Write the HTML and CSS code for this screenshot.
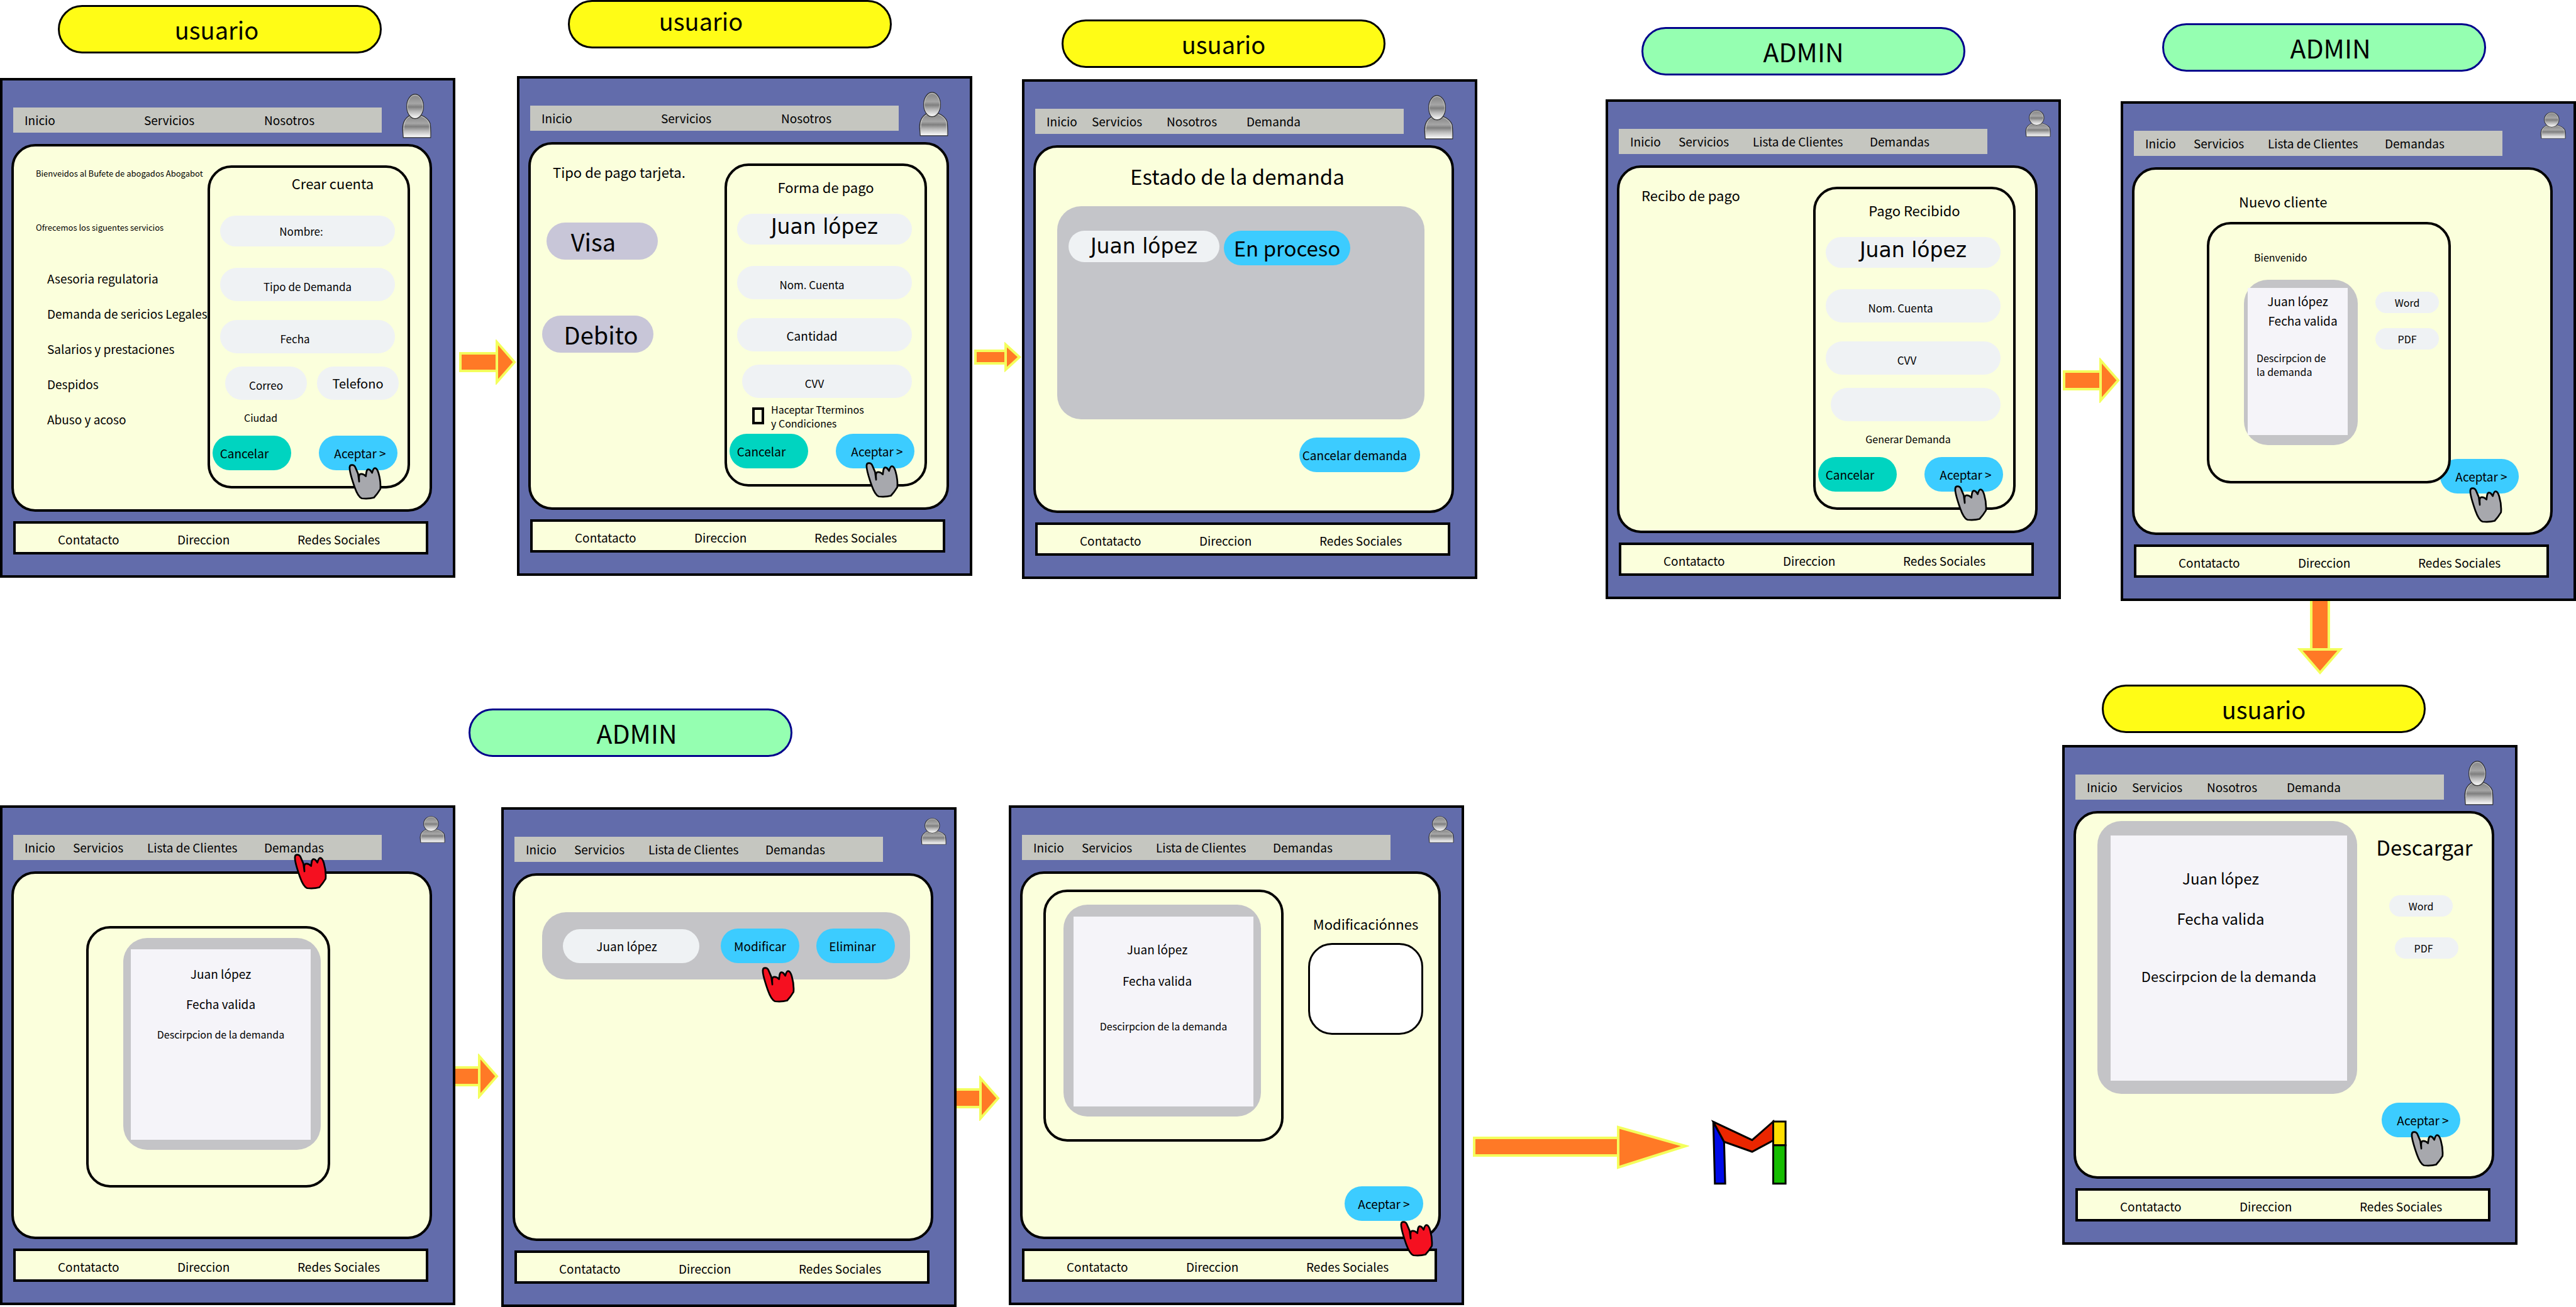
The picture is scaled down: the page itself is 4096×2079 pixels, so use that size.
FILE: index.html
```html
<!DOCTYPE html>
<html lang="es">
<head>
<meta charset="utf-8">
<meta name="viewport" content="width=device-width, initial-scale=1">
<title>Abogabot</title>
<link rel="stylesheet" href="styles.css">
</head>
<body>
<svg class="defs" aria-hidden="true">
  <defs>
    <linearGradient id="metal" x1="0" y1="0" x2="0" y2="1">
      <stop offset="0" stop-color="#8f8f8f"/>
      <stop offset="0.15" stop-color="#909090"/>
      <stop offset="0.38" stop-color="#a6a6a6"/>
      <stop offset="0.52" stop-color="#7f7f7f"/>
      <stop offset="0.7" stop-color="#b8b8b8"/>
      <stop offset="1" stop-color="#ffffff"/>
    </linearGradient>
    <symbol id="person" viewBox="383 61 190 286" preserveAspectRatio="none">
      <path d="M392 342 L388 292 C386 240 408 212 442 196 H500 C532 208 556 226 565 252 C569 280 570 300 568 342 Z" fill="url(#metal)" stroke="#2f2f2f" stroke-width="5"/>
      <path d="M395 290 C394 240 414 216 436 206 M508 206 C532 216 552 230 560 256 L564 338" fill="none" stroke="#d2d2d2" stroke-width="4"/>
      <ellipse cx="468" cy="143" rx="54" ry="78" fill="url(#metal)" stroke="#2f2f2f" stroke-width="5"/>
      <ellipse cx="468" cy="143" rx="50" ry="73" fill="none" stroke="#dadada" stroke-width="3"/>
    </symbol>
    <symbol id="hand" viewBox="130 183 214 230">
      <path d="M138 206 C138 184 166 184 175 206 L192 246 L199 296 C198 270 194 252 206 248 C220 244 232 252 242 262 C244 240 246 220 256 218 C268 216 274 226 282 240 C286 226 290 210 300 210 C310 210 318 224 324 244 C332 272 338 310 335 344 C322 366 308 384 294 399 C270 406 240 406 216 404 C196 396 180 360 170 332 C156 292 136 232 138 206 Z" fill="currentColor" stroke="#000" stroke-width="11" stroke-linejoin="round"/>
    </symbol>
  </defs>
</svg>

<main class="board">

  <p class="role role--user n1-role role--lean">usuario</p>
  <section class="screen n1">
    <header class="top">
      <nav class="menu menu--three"><a href="#">Inicio</a><a href="#">Servicios</a><a href="#">Nosotros</a></nav>
      <svg class="person"><use href="#person"/></svg>
    </header>
    <div class="page page--split">
      <div class="intro">
        <h2 class="headline headline--fine">Bienveidos al Bufete de abogados Abogabot</h2>
        <h2 class="headline headline--fine">Ofrecemos los siguentes servicios</h2>
        <ul class="services">
          <li>Asesoria regulatoria</li>
          <li>Demanda de sericios Legales</li>
          <li>Salarios y prestaciones</li>
          <li>Despidos</li>
          <li>Abuso y acoso</li>
        </ul>
      </div>
      <form class="form">
        <h3 class="form-title form-title--end">Crear cuenta</h3>
        <input class="field field--slim lean-s" placeholder="Nombre:" aria-label="Nombre">
        <input class="field" placeholder="Tipo de Demanda" aria-label="Tipo de Demanda">
        <input class="field lean-l" placeholder="Fecha" aria-label="Fecha">
        <div class="pair">
          <input class="field" placeholder="Correo" aria-label="Correo">
          <input class="field field--phone" placeholder="Telefono" aria-label="Telefono">
        </div>
        <p class="note note--city">Ciudad</p>
        <div class="actions">
          <button type="button" class="btn btn--cancel">Cancelar</button>
          <button type="button" class="btn btn--accept">Aceptar &gt;</button>
        </div>
      </form>
    </div>
    <footer class="foot"><a href="#">Contatacto</a><a href="#">Direccion</a><a href="#">Redes Sociales</a></footer>
    <svg class="hand"><use href="#hand"/></svg>
  </section>

  <p class="role role--user n2-role role--left">usuario</p>
  <section class="screen n2">
    <header class="top">
      <nav class="menu menu--three"><a href="#">Inicio</a><a href="#">Servicios</a><a href="#">Nosotros</a></nav>
      <svg class="person"><use href="#person"/></svg>
    </header>
    <div class="page page--split">
      <div class="intro">
        <h2 class="headline">Tipo de pago tarjeta.</h2>
        <div class="cards">
          <button type="button" class="card-type card-type--visa">Visa</button>
          <button type="button" class="card-type card-type--debit">Debito</button>
        </div>
      </div>
      <form class="form">
        <h3 class="form-title">Forma de pago</h3>
        <input class="field field--slim field--name" value="Juan lópez" aria-label="Nombre">
        <input class="field lean-l" placeholder="Nom. Cuenta" aria-label="Nom. Cuenta">
        <input class="field field--amount lean-l" placeholder="Cantidad" aria-label="Cantidad">
        <input class="field field--short lean-l" placeholder="CVV" aria-label="CVV">
        <label class="note note--terms"><input type="checkbox" class="tick"><span>Haceptar Tterminos<br>y Condiciones</span></label>
        <div class="actions">
          <button type="button" class="btn btn--cancel">Cancelar</button>
          <button type="button" class="btn btn--accept">Aceptar &gt;</button>
        </div>
      </form>
    </div>
    <footer class="foot"><a href="#">Contatacto</a><a href="#">Direccion</a><a href="#">Redes Sociales</a></footer>
    <svg class="hand"><use href="#hand"/></svg>
  </section>

  <p class="role role--user n3-role">usuario</p>
  <section class="screen n3">
    <header class="top">
      <nav class="menu menu--user"><a href="#">Inicio</a><a href="#">Servicios</a><a href="#">Nosotros</a><a href="#">Demanda</a></nav>
      <svg class="person"><use href="#person"/></svg>
    </header>
    <div class="page page--status">
      <h2 class="status-title">Estado de la demanda</h2>
      <div class="status-box">
        <span class="chip chip--client">Juan lópez</span>
        <span class="chip chip--progress">En proceso</span>
      </div>
      <button type="button" class="btn btn--drop">Cancelar demanda</button>
    </div>
    <footer class="foot"><a href="#">Contatacto</a><a href="#">Direccion</a><a href="#">Redes Sociales</a></footer>
  </section>

  <p class="role role--admin n4-role">ADMIN</p>
  <section class="screen n4">
    <header class="top">
      <nav class="menu menu--admin"><a href="#">Inicio</a><a href="#">Servicios</a><a href="#">Lista de Clientes</a><a href="#">Demandas</a></nav>
      <svg class="person person--small"><use href="#person"/></svg>
    </header>
    <div class="page page--split">
      <div class="intro">
        <h2 class="headline">Recibo de pago</h2>
      </div>
      <form class="form">
        <h3 class="form-title">Pago Recibido</h3>
        <input class="field field--slim field--name" value="Juan lópez" aria-label="Nombre">
        <input class="field lean-l" placeholder="Nom. Cuenta" aria-label="Nom. Cuenta">
        <input class="field lean-s" placeholder="CVV" aria-label="CVV">
        <input class="field field--short" aria-label="Otro dato">
        <p class="note note--case">Generar Demanda</p>
        <div class="actions">
          <button type="button" class="btn btn--cancel">Cancelar</button>
          <button type="button" class="btn btn--accept">Aceptar &gt;</button>
        </div>
      </form>
    </div>
    <footer class="foot"><a href="#">Contatacto</a><a href="#">Direccion</a><a href="#">Redes Sociales</a></footer>
    <svg class="hand"><use href="#hand"/></svg>
  </section>

  <p class="role role--admin n5-role role--right">ADMIN</p>
  <section class="screen n5">
    <header class="top">
      <nav class="menu menu--admin"><a href="#">Inicio</a><a href="#">Servicios</a><a href="#">Lista de Clientes</a><a href="#">Demandas</a></nav>
      <svg class="person person--small"><use href="#person"/></svg>
    </header>
    <div class="page page--client">
      <h2 class="client-title">Nuevo cliente</h2>
      <div class="frame">
        <p class="welcome">Bienvenido</p>
        <div class="frame-row">
          <article class="sheet sheet--small">
            <div class="paper">
              <p>Juan lópez</p>
              <p class="date">Fecha valida</p>
              <p class="about">Descirpcion de<br>la demanda</p>
            </div>
          </article>
          <div class="formats">
            <button type="button" class="format">Word</button>
            <button type="button" class="format">PDF</button>
          </div>
        </div>
      </div>
      <button type="button" class="btn btn--accept btn--tucked">Aceptar &gt;</button>
    </div>
    <footer class="foot"><a href="#">Contatacto</a><a href="#">Direccion</a><a href="#">Redes Sociales</a></footer>
    <svg class="hand"><use href="#hand"/></svg>
  </section>

  <p class="role role--user n6-role">usuario</p>
  <section class="screen n6">
    <header class="top">
      <nav class="menu menu--user"><a href="#">Inicio</a><a href="#">Servicios</a><a href="#">Nosotros</a><a href="#">Demanda</a></nav>
      <svg class="person"><use href="#person"/></svg>
    </header>
    <div class="page page--download">
      <article class="sheet sheet--large">
        <div class="paper">
          <p>Juan lópez</p>
          <p>Fecha valida</p>
          <p class="about">Descirpcion de la demanda</p>
        </div>
      </article>
      <div class="download">
        <h2 class="download-title">Descargar</h2>
        <button type="button" class="format format--word">Word</button>
        <button type="button" class="format format--pdf">PDF</button>
        <button type="button" class="btn btn--accept btn--low">Aceptar &gt;</button>
      </div>
    </div>
    <footer class="foot"><a href="#">Contatacto</a><a href="#">Direccion</a><a href="#">Redes Sociales</a></footer>
    <svg class="hand"><use href="#hand"/></svg>
  </section>

  <p class="role role--admin n7-role role--right">ADMIN</p>
  <section class="screen n7">
    <header class="top">
      <nav class="menu menu--admin"><a href="#">Inicio</a><a href="#">Servicios</a><a href="#">Lista de Clientes</a><a href="#">Demandas</a></nav>
      <svg class="person person--small"><use href="#person"/></svg>
    </header>
    <div class="page page--review">
      <div class="frame frame--sheet">
        <article class="sheet sheet--medium">
          <div class="paper">
            <p>Juan lópez</p>
            <p>Fecha valida</p>
            <p class="about">Descirpcion de la demanda</p>
          </div>
        </article>
      </div>
    </div>
    <footer class="foot"><a href="#">Contatacto</a><a href="#">Direccion</a><a href="#">Redes Sociales</a></footer>
    <svg class="hand hand--red hand--menu"><use href="#hand"/></svg>
  </section>

  <section class="screen n8">
    <header class="top">
      <nav class="menu menu--admin"><a href="#">Inicio</a><a href="#">Servicios</a><a href="#">Lista de Clientes</a><a href="#">Demandas</a></nav>
      <svg class="person person--small"><use href="#person"/></svg>
    </header>
    <div class="page page--list">
      <div class="client-row">
        <span class="client-name">Juan lópez</span>
        <button type="button" class="btn">Modificar</button>
        <button type="button" class="btn btn--remove">Eliminar</button>
      </div>
    </div>
    <footer class="foot"><a href="#">Contatacto</a><a href="#">Direccion</a><a href="#">Redes Sociales</a></footer>
    <svg class="hand hand--red hand--edit"><use href="#hand"/></svg>
  </section>

  <section class="screen n9">
    <header class="top">
      <nav class="menu menu--admin"><a href="#">Inicio</a><a href="#">Servicios</a><a href="#">Lista de Clientes</a><a href="#">Demandas</a></nav>
      <svg class="person person--small"><use href="#person"/></svg>
    </header>
    <div class="page page--edit">
      <div class="frame frame--edit">
        <article class="sheet sheet--edit">
          <div class="paper">
            <p class="lead">Juan lópez</p>
            <p class="lead">Fecha valida</p>
            <p class="about">Descirpcion de la demanda</p>
          </div>
        </article>
      </div>
      <div class="changes">
        <label for="changes">Modificaciónnes</label>
        <textarea id="changes"></textarea>
        <button type="button" class="btn btn--send">Aceptar &gt;</button>
      </div>
    </div>
    <footer class="foot"><a href="#">Contatacto</a><a href="#">Direccion</a><a href="#">Redes Sociales</a></footer>
    <svg class="hand hand--red hand--send"><use href="#hand"/></svg>
  </section>

  <svg class="arrow a1" viewBox="0 0 92 72"><path d="M2 22 H60 V50 H2 Z"/><path d="M60 4 L88 36 L60 68 Z"/></svg>
  <svg class="arrow a2" viewBox="0 0 76 48"><path d="M2 14 H50 V34 H2 Z"/><path d="M50 4 L72 24 L50 44 Z"/></svg>
  <svg class="arrow a4" viewBox="0 0 92 72"><path d="M2 22 H60 V50 H2 Z"/><path d="M60 4 L88 36 L60 68 Z"/></svg>
  <svg class="arrow a5" viewBox="0 0 72 118"><path d="M22 -4 H50 V77 H22 Z"/><path d="M4 77 H68 L36 114 Z"/></svg>
  <svg class="arrow a7" viewBox="0 0 70 72"><path d="M-4 22 H38 V50 H-4 Z"/><path d="M38 4 L66 36 L38 68 Z"/></svg>
  <svg class="arrow a8" viewBox="0 0 70 72"><path d="M-4 22 H38 V50 H-4 Z"/><path d="M38 4 L66 36 L38 68 Z"/></svg>
  <svg class="arrow a9" viewBox="0 0 344 70"><path d="M2 20 H231 V48 H2 Z"/><path d="M231 3 L338 33 L231 67 Z"/></svg>

  <svg class="mail" viewBox="1115 122 342 424" preserveAspectRatio="none" role="img" aria-label="Gmail">
    <path d="M1127 140 L1134 537 H1180 L1175 268 Z" fill="#000be8"/>
    <path d="M1127 140 L1300 257 L1394 138 V260 L1300 332 L1175 268 Z" fill="#ea2600"/>
    <path d="M1394 138 H1449 V291 H1394 Z" fill="#ffdf00"/>
    <path d="M1394 291 H1449 V537 H1394 Z" fill="#15bd00"/>
  </svg>
</main>
</body>
</html>
```

FILE: styles.css
```css
* { box-sizing: border-box; }

body {
  margin: 0;
  background: #fff;
  color: #000;
  font-family: "Noto Sans CJK SC", "Noto Sans", sans-serif;
  font-size: 19px;
}

h2, h3, p, ul { margin: 0; padding: 0; font-weight: 400; }
ul { list-style: none; }
a { color: inherit; text-decoration: none; }
button, input, textarea { margin: 0; padding: 0; border: 0; color: #000; font: inherit; }
.defs { position: absolute; width: 0; height: 0; }

/* Diagram canvas: every screen, role tag and arrow has its own place on it */
.board { position: relative; min-height: 100vh; }
.role, .screen, .arrow, .mail { position: absolute; }

.n1-role { left: 92px; top: 8px; }
.n2-role { left: 903px; top: 0; }
.n3-role { left: 1688px; top: 31px; }
.n4-role { left: 2610px; top: 43px; }
.n5-role { left: 3438px; top: 37px; }
.n6-role { left: 3342px; top: 1089px; }
.n7-role { left: 745px; top: 1127px; }
.n1 { left: 0; top: 124px; }
.n2 { left: 822px; top: 121px; }
.n3 { left: 1625px; top: 126px; }
.n4 { left: 2553px; top: 158px; }
.n5 { left: 3372px; top: 161px; }
.n6 { left: 3279px; top: 1185px; }
.n7 { left: 0; top: 1281px; }
.n8 { left: 797px; top: 1284px; }
.n9 { left: 1604px; top: 1281px; }
.a1 { left: 730px; top: 540px; width: 92px; height: 72px; }
.a2 { left: 1549px; top: 544px; width: 76px; height: 48px; }
.a4 { left: 3280px; top: 569px; width: 92px; height: 72px; }
.a5 { left: 3653px; top: 956px; width: 72px; height: 118px; }
.a7 { left: 724px; top: 1676px; width: 70px; height: 72px; }
.a8 { left: 1521px; top: 1711px; width: 70px; height: 72px; }
.a9 { left: 2342px; top: 1790px; width: 344px; height: 70px; }
.mail { left: 2720px; top: 1780px; width: 122px; height: 105px; overflow: visible; }

.arrow path { fill: #ff7926; stroke: #f4ff5c; stroke-width: 4px; }
.mail path { stroke: #000; stroke-width: 3px; vector-effect: non-scaling-stroke; }

/* Role tags */
.role {
  width: 515px;
  height: 77px;
  border: 3px solid #000;
  border-radius: 39px;
  font-size: 38px;
  line-height: 71px;
  text-align: center;
}
.role--user { background: #fffc16; }
.role--admin { background: #95ffb1; border-color: #00008b; font-size: 41px; }
.role--lean { padding-right: 10px; }
.role--left { padding-right: 92px; line-height: 60px; }
.role--right { padding-left: 20px; }

/* Screen shell */
.screen {
  width: 724px;
  border: 4px solid #000;
  background: #626cab;
  padding-bottom: 33px;
}
.top { display: flex; align-items: flex-start; height: 101px; padding-left: 17px; }
.menu {
  flex: 1;
  display: grid;
  margin-top: 43px;
  padding-left: 18px;
  background: #c5c6c0;
  line-height: 40px;
  white-space: nowrap;
}
.menu--three { grid-template-columns: 190px 191px auto; }
.menu--user { grid-template-columns: 72px 119px 127px auto; }
.menu--admin { grid-template-columns: 77px 118px 186px auto; }
.person { width: 47px; height: 71px; margin: 21px 34px 0 32px; }
.person--small { width: 41px; height: 43px; margin: 13px 12px 0 60px; }
.page {
  min-height: 585px;
  margin: 0 33px 0 14px;
  border: 4px solid #000;
  border-radius: 38px;
  background: #fbffdc;
}
.foot {
  display: grid;
  grid-template-columns: 190px 191px auto;
  margin: 15px 39px 0 17px;
  padding: 4px 0 0 67px;
  border: 4px solid #000;
  background: #fbffdc;
  line-height: 41px;
}
.hand { position: absolute; left: 550px; top: 610px; width: 53px; height: 57px; color: #a7a8ad; z-index: 2; }
.hand--red { color: #f51020; }
.hand--menu { left: 463px; top: 73px; }
.hand--edit { left: 410px; top: 250px; }
.hand--send { left: 618px; top: 657px; }

/* Buttons */
.btn {
  width: 125px;
  height: 55px;
  border-radius: 28px;
  background: #3cccff;
  line-height: 55px;
  white-space: nowrap;
}
.btn--cancel { background: #00d4c0; padding-right: 24px; }
.btn--accept { padding-left: 6px; }

/* Screens with a form on the right */
.page--split { display: grid; grid-template-columns: 308px minmax(0, 1fr); }
.headline {
  padding-left: 35px;
  font-size: 22px;
  line-height: 86px;
  white-space: nowrap;
}
.headline--fine { font-size: 13px; }
.services { padding: 10px 0 0 53px; line-height: 56px; white-space: nowrap; }
.cards { padding-top: 38px; }
.card-type {
  display: block;
  width: 177px;
  height: 59px;
  border-radius: 30px;
  background: #c8c6d8;
  font-size: 38px;
  line-height: 59px;
}
.card-type--visa { margin-left: 25px; padding-right: 28px; }
.card-type--debit { margin: 89px 0 0 18px; padding-left: 10px; }

.form {
  display: flex;
  flex-direction: column;
  height: 514px;
  margin: 30px 31px 33px 0;
  border: 4px solid #000;
  border-radius: 38px;
}
.form-title { margin-bottom: 10px; font-size: 22px; line-height: 66px; text-align: center; }
.form-title--end { padding-left: 76px; margin-bottom: 28px; line-height: 48px; }
.field {
  min-width: 0;
  height: 53px;
  margin: 0 20px 30px 16px;
  padding-top: 6px;
  border-radius: 27px;
  background: #eff2f4;
  font-size: 17px;
  text-align: center;
}
.field::placeholder { color: #000; opacity: 1; }
.field--slim { height: 49px; margin-bottom: 34px; padding-top: 0; }
.field--name { padding-bottom: 8px; font-family: "DejaVu Sans", sans-serif; font-size: 33px; }
.field--amount { font-size: 19px; padding-top: 2px; }
.field--short { margin-left: 24px; }
.lean-s { padding-right: 20px; }
.lean-l { padding-right: 40px; }
.field:has(+ .pair), .field:has(+ .field--short) { margin-bottom: 21px; }
.pair { display: grid; grid-template-columns: 1fr 1fr; gap: 16px; margin: 0 14px 0 24px; }
.pair .field, .field--short { margin-bottom: 0; }
.pair .field { margin-left: 0; margin-right: 0; }
.field--phone { font-size: 20px; padding-top: 0; }
.note { height: 57px; font-size: 16px; line-height: 57px; }
.note--city { padding-left: 54px; }
.note--case { padding-right: 20px; text-align: center; }
.note--terms { display: flex; align-items: center; gap: 11px; padding-left: 40px; line-height: 22px; white-space: nowrap; }
.tick { appearance: none; width: 19px; height: 27px; border: 4px solid #000; }
.actions { display: flex; justify-content: space-between; padding: 0 16px 0 4px; }

/* Case status */
.status-title { padding-right: 20px; margin-bottom: 3px; font-size: 33px; line-height: 90px; text-align: center; }
.status-box {
  display: flex;
  align-items: flex-start;
  gap: 7px;
  width: 584px;
  height: 339px;
  margin-left: 34px;
  padding: 39px 18px;
  border-radius: 38px;
  background: #c4c5c9;
}
.chip { border-radius: 28px; text-align: center; white-space: nowrap; }
.chip--client { width: 240px; background: #eff2f4; font-family: "DejaVu Sans", sans-serif; font-size: 33px; line-height: 50px; }
.chip--progress { width: 201px; background: #3cccff; font-size: 33px; line-height: 55px; }
.btn--drop { display: block; width: 192px; margin: 29px 0 0 419px; padding-right: 16px; }

/* Documents */
.frame {
  position: relative;
  z-index: 1;
  width: 388px;
  height: 416px;
  border: 4px solid #000;
  border-radius: 38px;
  background: #fbffdc;
}
.sheet { border-radius: 38px; background: #c4c4c7; text-align: center; white-space: nowrap; }
.paper { height: 100%; background: #f5f4f9; }
.sheet .about { font-size: 16px; }

.client-title { padding: 17px 0 0 166px; font-size: 22px; line-height: 66px; }
.page--client .frame { margin-left: 115px; }
.welcome { padding: 16px 0 0 71px; font-size: 16px; line-height: 72px; }
.frame-row { display: flex; padding-left: 55px; }
.sheet--small { width: 181px; height: 263px; padding: 13px 16px 16px 6px; line-height: 42px; }
.sheet--small .date { padding-left: 16px; line-height: 20px; }
.sheet--small .about { margin-top: 38px; padding-left: 14px; line-height: 22px; text-align: left; }
.formats { display: flex; flex-direction: column; gap: 24px; padding: 19px 0 0 28px; }
.format { width: 101px; height: 34px; border-radius: 17px; background: #eff2f4; font-size: 16px; line-height: 34px; }
.btn--tucked { display: block; margin: -39px 0 0 486px; }

.page--download { display: grid; grid-template-columns: 413px auto; padding-left: 34px; }
.sheet--large { height: 434px; margin-top: 12px; padding: 23px 16px 21px 21px; font-size: 24px; line-height: 64px; }
.sheet--large .paper { padding-top: 36px; }
.sheet--large p { padding-right: 26px; }
.sheet--large .about { margin-top: 27px; padding-right: 0; font-size: 22px; }
.download { display: flex; flex-direction: column; align-items: flex-start; }
.download-title { align-self: stretch; font-size: 33px; line-height: 107px; text-align: center; }
.format--word { margin: 23px 0 33px 51px; }
.format--pdf { margin-left: 60px; padding-right: 10px; }
.btn--low { margin: auto 0 62px 39px; }

.page--review { padding: 83px 0 0 115px; }
.frame--sheet { padding: 15px 0 0 55px; }
.sheet--medium, .sheet--edit { width: 314px; height: 337px; }
.sheet--medium { padding: 18px 16px 16px 12px; line-height: 48px; }
.sheet--medium .paper { padding-top: 15px; }

.page--list { padding: 58px 0 0 43px; }
.client-row {
  display: flex;
  align-items: center;
  width: 585px;
  height: 107px;
  padding-left: 33px;
  border-radius: 38px;
  background: #c4c4c7;
}
.client-name { width: 217px; margin-right: 34px; padding-right: 14px; border-radius: 27px; background: #eff2f4; line-height: 54px; text-align: center; }
.btn--remove { margin-left: 27px; padding-right: 10px; }

.page--edit { display: grid; grid-template-columns: 382px 183px; column-gap: 39px; padding: 0 0 0 33px; }
.frame--edit { width: auto; height: 401px; margin-top: 25px; padding: 20px 0 0 28px; }
.sheet--edit { padding: 19px 12px 16px 16px; line-height: 50px; }
.sheet--edit .paper { padding-top: 27px; }
.sheet--edit .lead { padding-right: 20px; }
.sheet--edit .about { margin-top: 22px; }
.changes { display: flex; flex-direction: column; }
.changes label { padding-top: 50px; margin-bottom: 2px; font-size: 22px; line-height: 58px; text-align: center; }
.changes textarea { height: 146px; padding: 20px; border: 3px solid #000; border-radius: 38px; background: #fff; resize: none; }
.btn--send { align-self: flex-end; margin: auto 0 25px; }
```
